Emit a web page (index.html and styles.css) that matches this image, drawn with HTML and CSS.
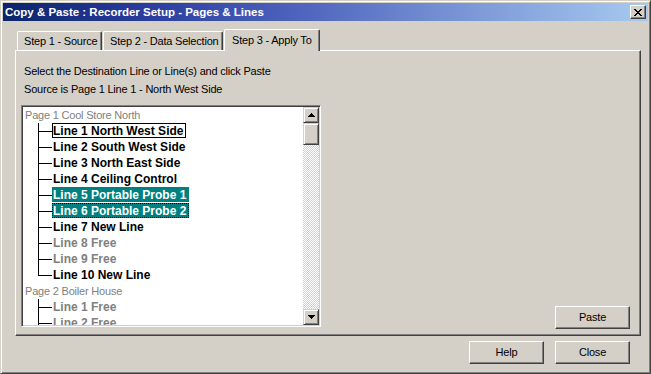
FILE: index.html
```html
<!DOCTYPE html>
<html>
<head>
<meta charset="utf-8">
<link rel="stylesheet" href="styles.css">
</head>
<body>
<div class="window">
  <div class="titlebar">
    <span class="title">Copy &amp; Paste : Recorder Setup - Pages &amp; Lines</span>
    <div class="close-btn">
      <svg width="8" height="7" viewBox="0 0 8 7"><path fill="#000" d="M0 0h2v1H0z M6 0h2v1H6z M1 1h2v1H1z M5 1h2v1H5z M2 2h4v1H2z M3 3h2v1H3z M2 4h4v1H2z M1 5h2v1H1z M5 5h2v1H5z M0 6h2v1H0z M6 6h2v1H6z"/></svg>
    </div>
  </div>
  <div class="client">
    <div class="tabs">
      <div class="tab tab-1">Step 1 - Source</div>
      <div class="tab tab-2">Step 2 - Data Selection</div>
      <div class="tab tab-3 active">Step 3 - Apply To</div>
    </div>
    <div class="panel">
      <div class="panel-main">
        <div class="intro">Select the Destination Line or Line(s) and click Paste</div>
        <div class="intro">Source is Page 1 Line 1 - North West Side</div>
        <div class="tree">
          <div class="tree-list">
            <div class="page"><span class="page-label">Page 1 Cool Store North</span></div>
            <div class="children">
              <div class="node"><span class="label focus">Line 1 North West Side</span></div>
              <div class="node"><span class="label">Line 2 South West Side</span></div>
              <div class="node"><span class="label">Line 3 North East Side</span></div>
              <div class="node"><span class="label">Line 4 Ceiling Control</span></div>
              <div class="node"><span class="label selected">Line 5 Portable Probe 1</span></div>
              <div class="node"><span class="label selected dotted">Line 6 Portable Probe 2</span></div>
              <div class="node"><span class="label">Line 7 New Line</span></div>
              <div class="node"><span class="label free">Line 8 Free</span></div>
              <div class="node"><span class="label free">Line 9 Free</span></div>
              <div class="node last"><span class="label">Line 10 New Line</span></div>
            </div>
            <div class="page"><span class="page-label">Page 2 Boiler House</span></div>
            <div class="children">
              <div class="node"><span class="label free">Line 1 Free</span></div>
              <div class="node"><span class="label free">Line 2 Free</span></div>
            </div>
          </div>
          <div class="vscroll">
            <div class="sbtn">
              <svg width="7" height="4" viewBox="0 0 7 4"><path fill="#000" d="M3 0h1v1H3z M2 1h3v1H2z M1 2h5v1H1z M0 3h7v1H0z"/></svg>
            </div>
            <div class="thumb"></div>
            <div class="track"></div>
            <div class="sbtn">
              <svg width="7" height="4" viewBox="0 0 7 4"><path fill="#000" d="M0 0h7v1H0z M1 1h5v1H1z M2 2h3v1H2z M3 3h1v1H3z"/></svg>
            </div>
          </div>
        </div>
      </div>
      <div class="panel-side">
        <div class="btn">Paste</div>
      </div>
    </div>
    <div class="footer">
      <div class="btn">Help</div>
      <div class="btn">Close</div>
    </div>
  </div>
</div>
</body>
</html>
```
FILE: styles.css
```css
html, body {
  margin: 0;
  padding: 0;
  background: #d4d0c8;
  overflow: hidden;
}

.window {
  width: 651px;
  height: 374px;
  box-sizing: border-box;
  border: 1px solid;
  border-color: #d4d0c8 #404040 #404040 #d4d0c8;
  box-shadow: inset 1px 1px #ffffff, inset -1px -1px #808080;
  padding: 2px;
  background: #d4d0c8;
  display: flex;
  flex-direction: column;
  font-family: "Liberation Sans", Arial, sans-serif;
  font-size: 11px;
  letter-spacing: -0.2px;
  color: #000;
}

.titlebar {
  height: 18px;
  flex: none;
  display: flex;
  align-items: center;
  justify-content: space-between;
  padding: 0 2px;
  background: linear-gradient(to right, #0a246a 0%, #2a3c9e 22%, #4c62bc 45%, #7893d4 70%, #a6caf0 100%);
}

.title {
  color: #fff;
  font-weight: bold;
  font-size: 11.5px;
  letter-spacing: 0;
  white-space: nowrap;
}

.close-btn {
  width: 16px;
  height: 14px;
  box-sizing: border-box;
  border: 1px solid;
  border-color: #ffffff #404040 #404040 #ffffff;
  box-shadow: inset -1px -1px #808080;
  background: #d4d0c8;
  display: flex;
  align-items: center;
  justify-content: center;
}

.close-btn svg {
  display: block;
  margin-left: -1px;
}

.client {
  flex: 1;
  padding: 8px 7px 0 12px;
  display: flex;
  flex-direction: column;
}

.tabs {
  height: 21px;
  display: flex;
  align-items: flex-end;
  padding-left: 2px;
}

.tab {
  height: 19px;
  box-sizing: border-box;
  border-top: 1px solid #fff;
  border-left: 1px solid #fff;
  border-right: 1px solid #404040;
  border-top-left-radius: 2px;
  border-top-right-radius: 2px;
  box-shadow: inset -1px 0 #808080;
  padding-left: 6px;
  line-height: 18px;
  white-space: nowrap;
  background: #d4d0c8;
}

.tab-1 { width: 85px; }
.tab-2 { width: 120px; margin-left: 1px; }

.tab.active {
  width: 96px;
  height: 22px;
  margin-left: 1px;
  margin-bottom: -1px;
  padding-top: 1px;
  padding-left: 7px;
  position: relative;
  z-index: 1;
}

.panel {
  height: 286px;
  box-sizing: border-box;
  border: 1px solid;
  border-color: #ffffff #404040 #404040 #ffffff;
  box-shadow: inset -1px -1px #808080;
  padding: 11px 10px 6px 5px;
  display: flex;
}

.panel-main {
  flex: 1;
  display: flex;
  flex-direction: column;
}

.intro {
  line-height: 18px;
  padding-left: 3px;
  white-space: nowrap;
}

.tree {
  margin-top: 7px;
  width: 300px;
  height: 222px;
  box-sizing: border-box;
  border: 1px solid;
  border-color: #808080 #ffffff #ffffff #808080;
  box-shadow: inset 1px 1px #404040, inset -1px -1px #d4d0c8;
  padding: 1px;
  background: #fff;
  display: flex;
}

.tree-list {
  flex: 1;
  overflow: hidden;
}

.page {
  height: 16px;
}

.page-label {
  display: inline-block;
  box-sizing: border-box;
  height: 15px;
  border: 1px solid transparent;
  padding-left: 1px;
  line-height: 14px;
  color: #808080;
  white-space: nowrap;
}

.children {
  margin-left: 15px;
}

.node {
  height: 16px;
  padding-left: 14px;
  background:
    linear-gradient(#000, #000) 0 0 / 1px 100% no-repeat,
    linear-gradient(#000, #000) 0 8px / 14px 1px no-repeat;
}

.node.last {
  background:
    linear-gradient(#000, #000) 0 0 / 1px 9px no-repeat,
    linear-gradient(#000, #000) 0 8px / 14px 1px no-repeat;
}

.label {
  display: inline-block;
  box-sizing: border-box;
  height: 15px;
  border: 1px solid transparent;
  padding: 0 2px 0 0;
  line-height: 14px;
  font-size: 12px;
  font-weight: bold;
  letter-spacing: 0;
  white-space: nowrap;
  color: #000;
}

.label.focus {
  border-color: #000;
}

.label.selected {
  background: #008080;
  color: #fff;
}

.label.dotted {
  border: 1px dotted #000;
}

.label.free {
  color: #808080;
}

.vscroll {
  width: 16px;
  flex: none;
  display: flex;
  flex-direction: column;
}

.sbtn, .thumb {
  box-sizing: border-box;
  border: 1px solid;
  border-color: #d4d0c8 #404040 #404040 #d4d0c8;
  box-shadow: inset 1px 1px #ffffff, inset -1px -1px #808080;
  background: #d4d0c8;
}

.sbtn {
  height: 16px;
  display: flex;
  align-items: center;
  justify-content: center;
}

.sbtn svg {
  display: block;
}

.thumb {
  height: 22px;
}

.track {
  flex: 1;
  background: repeating-conic-gradient(#d4d0c8 0% 25%, #ffffff 0% 50%) 0 0 / 2px 2px;
}

.panel-side {
  display: flex;
  align-items: flex-end;
}

.btn {
  width: 75px;
  height: 23px;
  box-sizing: border-box;
  border: 1px solid;
  border-color: #ffffff #404040 #404040 #ffffff;
  box-shadow: inset -1px -1px #808080;
  background: #d4d0c8;
  text-align: center;
  line-height: 20px;
}

.footer {
  margin-top: 5px;
  padding-right: 11px;
  display: flex;
  justify-content: flex-end;
  gap: 11px;
}
```
